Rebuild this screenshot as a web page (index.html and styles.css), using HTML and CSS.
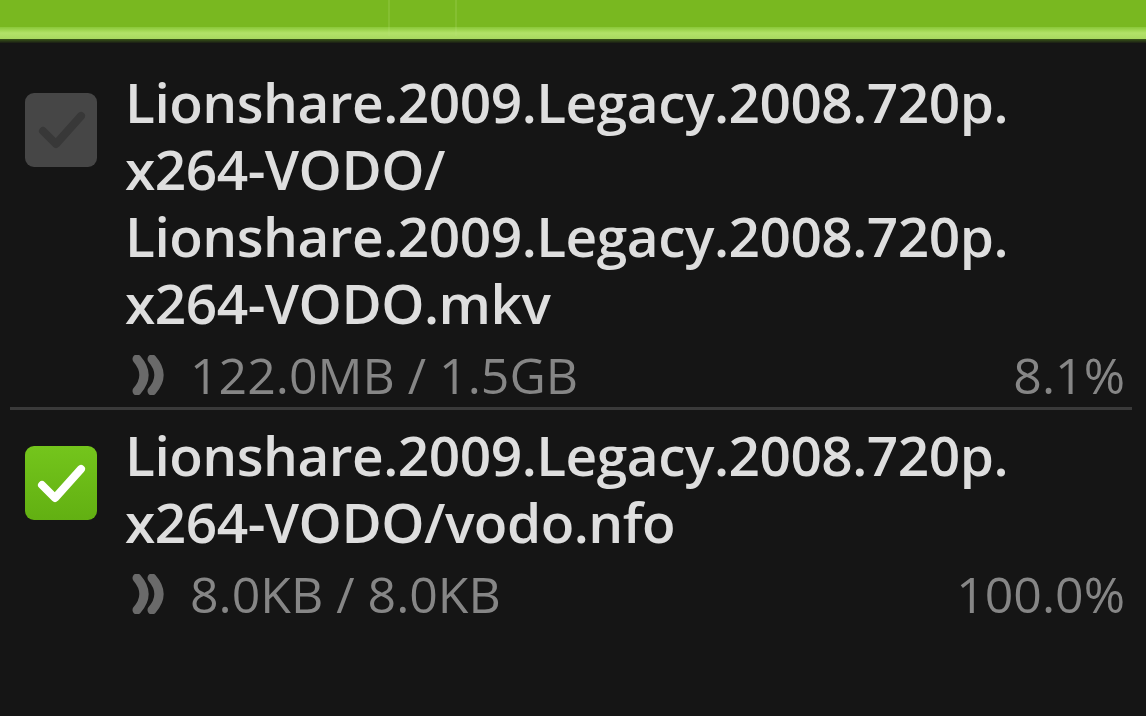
FILE: index.html
```html
<!DOCTYPE html>
<html>
<head>
<meta charset="utf-8">
<link rel="stylesheet" href="styles.css">
</head>
<body>
<div class="topbar">
  <div class="tb-fill">
    <span class="tb-sep tb-sep1"></span>
    <span class="tb-sep tb-sep2"></span>
  </div>
  <div class="tb-glow"></div>
  <div class="tb-edge"></div>
</div>
<div class="list">
  <div class="row row1">
    <div class="check check-off">
      <svg viewBox="0 0 72 72" width="72" height="72"><path d="M18 37 L31 50 L56 22" fill="none" stroke="#383838" stroke-width="8" stroke-linecap="round" stroke-linejoin="round"/></svg>
    </div>
    <div class="info">
      <div class="name">Lionshare.2009.Legacy.2008.720p.<br>x264-VODO/<br>Lionshare.2009.Legacy.2008.720p.<br>x264-VODO.mkv</div>
      <div class="meta">
        <span class="chev"><svg viewBox="0 0 40 40" width="40" height="40"><path d="M5 4 Q19 20 5 36 M20 4 Q34 20 20 36" fill="none" stroke="#6a6a6a" stroke-width="9" stroke-linecap="round"/></svg></span>
        <span class="size">122.0MB / 1.5GB</span>
        <span class="pct">8.1%</span>
      </div>
    </div>
  </div>
  <div class="divider"></div>
  <div class="row row2">
    <div class="check check-on">
      <svg viewBox="0 0 72 72" width="72" height="72"><path d="M17 38 L30 51 L56 22" fill="none" stroke="#ffffff" stroke-width="8" stroke-linecap="round" stroke-linejoin="round"/></svg>
    </div>
    <div class="info">
      <div class="name">Lionshare.2009.Legacy.2008.720p.<br>x264-VODO/vodo.nfo</div>
      <div class="meta">
        <span class="chev"><svg viewBox="0 0 40 40" width="40" height="40"><path d="M5 4 Q19 20 5 36 M20 4 Q34 20 20 36" fill="none" stroke="#6a6a6a" stroke-width="9" stroke-linecap="round"/></svg></span>
        <span class="size">8.0KB / 8.0KB</span>
        <span class="pct">100.0%</span>
      </div>
    </div>
  </div>
</div>
</body>
</html>
```
FILE: styles.css
```css
html, body {
  margin: 0;
  padding: 0;
  background: #151515;
  width: 1146px;
  height: 716px;
  overflow: hidden;
  font-family: "Open Sans", "DejaVu Sans", sans-serif;
}
.topbar {
  display: flex;
  flex-direction: column;
}
.tb-fill {
  height: 27px;
  background: #79b820;
  position: relative;
}
.tb-sep {
  position: absolute;
  top: 0;
  width: 2px;
  height: 36px;
  background: rgba(190, 230, 130, 0.18);
}
.tb-sep1 { left: 388px; }
.tb-sep2 { left: 455px; }
.tb-glow {
  height: 12px;
  background: linear-gradient(#8ac838, #b2e268 50%, #a8d860);
}
.tb-edge {
  height: 4px;
  background: linear-gradient(#3a5618, #1a1e14);
}
.list {
  display: flex;
  flex-direction: column;
}
.row {
  display: flex;
  align-items: flex-start;
}
.row1 { padding-top: 25px; }
.row2 { padding-top: 11px; }
.check {
  width: 72px;
  height: 74px;
  border-radius: 9px;
  margin-left: 25px;
  margin-right: 28px;
  margin-top: 25px;
  display: flex;
  align-items: center;
  justify-content: center;
  flex-shrink: 0;
}
.check-off { background: #464646; }
.check-on { background: linear-gradient(#74c51c, #62b012); }
.info {
  flex: 1;
  padding-right: 21px;
}
.name {
  color: #dedede;
  font-size: 55px;
  font-weight: 600;
  line-height: 67px;
  letter-spacing: -0.5px;
}
.meta {
  display: flex;
  align-items: center;
  color: #868686;
  font-size: 50px;
  line-height: 60px;
  height: 60px;
  margin-top: 9px;
}
.chev {
  width: 40px;
  height: 40px;
  display: flex;
  margin-left: 7px;
  margin-right: 18px;
}
.size { flex: 1; }
.pct { text-align: right; }
.divider {
  height: 3px;
  margin: 2px 14px 0 10px;
  background: #3a3a3a;
}
```
